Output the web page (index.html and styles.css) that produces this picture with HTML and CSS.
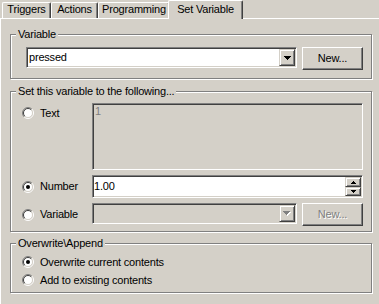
FILE: index.html
```html
<!DOCTYPE html>
<html>
<head>
<meta charset="utf-8">
<link rel="stylesheet" href="styles.css">
</head>
<body>
<div class="tabs">
  <div class="tab t1">Triggers</div>
  <div class="tab t2">Actions</div>
  <div class="tab t3">Programming</div>
  <div class="tab sel">Set Variable</div>
</div>
<div class="panel">
  <div class="group g1">
    <span class="legend">Variable</span>
    <div class="row">
      <div class="combo sunken c-main">
        <span class="val">pressed</span>
        <span class="ddbtn rb"><svg width="7" height="4" viewBox="0 0 7 4"><path d="M0 0h7v1h-1v1h-1v1h-1v1h-1v-1h-1v-1h-1v-1h-1z" fill="#000"/></svg></span>
      </div>
      <div class="btn">New...</div>
    </div>
  </div>

  <div class="group g2">
    <span class="legend">Set this variable to the following...</span>
    <div class="grid">
      <label class="radio r-top">
        <svg width="12" height="12" viewBox="0 0 12 12"><circle cx="6" cy="6" r="4.5" fill="#fff"/><path d="M9.9 2.1A5.5 5.5 0 0 0 2.1 9.9" fill="none" stroke="#808080"/><path d="M2.1 9.9A5.5 5.5 0 0 0 9.9 2.1" fill="none" stroke="#fff"/><path d="M9.2 2.8A4.5 4.5 0 0 0 2.8 9.2" fill="none" stroke="#404040"/><path d="M2.8 9.2A4.5 4.5 0 0 0 9.2 2.8" fill="none" stroke="#d4d0c8"/></svg>
        <span>Text</span>
      </label>
      <div class="area sunken">1</div>

      <label class="radio">
        <svg width="12" height="12" viewBox="0 0 12 12"><circle cx="6" cy="6" r="4.5" fill="#fff"/><path d="M9.9 2.1A5.5 5.5 0 0 0 2.1 9.9" fill="none" stroke="#808080"/><path d="M2.1 9.9A5.5 5.5 0 0 0 9.9 2.1" fill="none" stroke="#fff"/><path d="M9.2 2.8A4.5 4.5 0 0 0 2.8 9.2" fill="none" stroke="#404040"/><path d="M2.8 9.2A4.5 4.5 0 0 0 9.2 2.8" fill="none" stroke="#d4d0c8"/><circle cx="6" cy="6" r="2" fill="#000"/></svg>
        <span>Number</span>
      </label>
      <div class="edit sunken num">
        <span class="val">1.00</span>
        <span class="spin">
          <span class="rb up"><svg width="5" height="3" viewBox="0 0 5 3"><path d="M2 0h1v1h1v1h1v1h-5v-1h1v-1h1z" fill="#000"/></svg></span>
          <span class="rb down"><svg width="5" height="3" viewBox="0 0 5 3"><path d="M0 0h5v1h-1v1h-1v1h-1v-1h-1v-1h-1z" fill="#000"/></svg></span>
        </span>
      </div>

      <label class="radio">
        <svg width="12" height="12" viewBox="0 0 12 12"><circle cx="6" cy="6" r="4.5" fill="#fff"/><path d="M9.9 2.1A5.5 5.5 0 0 0 2.1 9.9" fill="none" stroke="#808080"/><path d="M2.1 9.9A5.5 5.5 0 0 0 9.9 2.1" fill="none" stroke="#fff"/><path d="M9.2 2.8A4.5 4.5 0 0 0 2.8 9.2" fill="none" stroke="#404040"/><path d="M2.8 9.2A4.5 4.5 0 0 0 9.2 2.8" fill="none" stroke="#d4d0c8"/></svg>
        <span>Variable</span>
      </label>
      <div class="row">
        <div class="combo sunken c-var disabled">
          <span class="val"></span>
          <span class="ddbtn rb"><svg width="8" height="5" viewBox="0 0 8 5"><path d="M1 1h7v1h-1v1h-1v1h-1v1h-1v-1h-1v-1h-1v-1h-1z" fill="#fff"/><path d="M0 0h7v1h-1v1h-1v1h-1v1h-1v-1h-1v-1h-1v-1h-1z" fill="#808080"/></svg></span>
        </div>
        <div class="btn disabled">New...</div>
      </div>
    </div>
  </div>

  <div class="group g3">
    <span class="legend">Overwrite\Append</span>
    <div class="stack">
      <label class="radio">
        <svg width="12" height="12" viewBox="0 0 12 12"><circle cx="6" cy="6" r="4.5" fill="#fff"/><path d="M9.9 2.1A5.5 5.5 0 0 0 2.1 9.9" fill="none" stroke="#808080"/><path d="M2.1 9.9A5.5 5.5 0 0 0 9.9 2.1" fill="none" stroke="#fff"/><path d="M9.2 2.8A4.5 4.5 0 0 0 2.8 9.2" fill="none" stroke="#404040"/><path d="M2.8 9.2A4.5 4.5 0 0 0 9.2 2.8" fill="none" stroke="#d4d0c8"/><circle cx="6" cy="6" r="2" fill="#000"/></svg>
        <span>Overwrite current contents</span>
      </label>
      <label class="radio">
        <svg width="12" height="12" viewBox="0 0 12 12"><circle cx="6" cy="6" r="4.5" fill="#fff"/><path d="M9.9 2.1A5.5 5.5 0 0 0 2.1 9.9" fill="none" stroke="#808080"/><path d="M2.1 9.9A5.5 5.5 0 0 0 9.9 2.1" fill="none" stroke="#fff"/><path d="M9.2 2.8A4.5 4.5 0 0 0 2.8 9.2" fill="none" stroke="#404040"/><path d="M2.8 9.2A4.5 4.5 0 0 0 9.2 2.8" fill="none" stroke="#d4d0c8"/></svg>
        <span>Add to existing contents</span>
      </label>
    </div>
  </div>
</div>
</body>
</html>
```

FILE: styles.css
```css
html, body {
  margin: 0;
  padding: 0;
  background: #d4d0c8;
}
body {
  width: 379px;
  height: 304px;
  overflow: hidden;
  font-family: "Liberation Sans", Arial, sans-serif;
  font-size: 11px;
  letter-spacing: -0.2px;
  line-height: 13px;
  color: #000;
}

/* Tabs */
.tabs {
  display: flex;
  align-items: flex-end;
  height: 18px;
  padding-left: 2px;
}
.tab {
  box-sizing: border-box;
  height: 16px;
  border-top: 1px solid #fff;
  border-left: 1px solid #fff;
  border-right: 1px solid #404040;
  box-shadow: inset -1px 0 0 #808080;
  border-radius: 2px 2px 0 0;
  text-align: center;
  white-space: nowrap;
  background: #d4d0c8;
}
.t1 { width: 49px; }
.t2 { width: 47px; }
.t3 { width: 72px; }
.tab.sel {
  position: relative;
  z-index: 1;
  width: 75px;
  height: 19px;
  margin-left: -2px;
  margin-bottom: -1px;
  padding-top: 2px;
}

/* Panel */
.panel {
  box-sizing: border-box;
  height: 286px;
  border-top: 1px solid #fff;
  border-left: 1px solid #fff;
  padding: 15px 7px 0 9px;
}

.group {
  position: relative;
  box-sizing: border-box;
  border: 1px solid #808080;
  box-shadow: 1px 1px 0 #fff, inset 1px 1px 0 #fff;
}
.legend {
  position: absolute;
  top: -7px;
  left: 5px;
  padding: 0 2px;
  background: #d4d0c8;
  white-space: nowrap;
}
.g1 { padding: 12px 8px 8px 15px; }
.g2 { margin-top: 12px; padding: 11px 8px 5px 11px; }
.g3 { margin-top: 11px; padding: 10px 8px 4px 11px; }

.row {
  display: flex;
  gap: 5px;
  align-items: flex-start;
}

/* 3D borders */
.sunken {
  box-sizing: border-box;
  border: 1px solid;
  border-color: #808080 #fff #fff #808080;
  box-shadow: inset 1px 1px 0 #404040, inset -1px -1px 0 #d4d0c8;
}
.rb {
  box-sizing: border-box;
  border: 1px solid;
  border-color: #d4d0c8 #404040 #404040 #d4d0c8;
  box-shadow: inset 1px 1px 0 #fff, inset -1px -1px 0 #808080;
  background: #d4d0c8;
  display: flex;
  align-items: center;
  justify-content: center;
}
.btn {
  box-sizing: border-box;
  width: 61px;
  height: 23px;
  border: 1px solid;
  border-color: #fff #404040 #404040 #fff;
  box-shadow: inset -1px -1px 0 #808080;
  display: flex;
  align-items: center;
  justify-content: center;
}
.btn.disabled {
  color: #808080;
  text-shadow: 1px 1px 0 #fff;
}

/* Combo */
.combo {
  display: flex;
  align-items: center;
  height: 21px;
  padding: 1px;
  background: #fff;
}
.combo .val {
  flex: 1;
  padding-left: 1px;
}
.ddbtn {
  width: 16px;
  height: 17px;
  align-self: stretch;
}
.c-main { width: 271px; }
.c-var { width: 205px; }
.combo.disabled { background: #d4d0c8; }

/* Grid of value rows */
.grid {
  display: grid;
  grid-template-columns: 70px 271px;
  grid-template-rows: 67px 23px 23px;
  row-gap: 5px;
}

.radio {
  display: flex;
  align-items: center;
  gap: 6px;
  height: 14px;
  align-self: center;
  white-space: nowrap;
}
.radio svg { flex: none; }
.r-top {
  align-self: start;
  margin-top: 3px;
}

.area {
  background: #d4d0c8;
  color: #808080;
  padding: 1px 2px;
}

.edit.num {
  display: flex;
  align-items: stretch;
  padding: 1px;
  background: #fff;
  height: 23px;
}
.num .val {
  flex: 1;
  display: flex;
  align-items: center;
  padding-left: 0;
}
.spin {
  width: 16px;
  display: flex;
  flex-direction: column;
}
.spin .up { height: 10px; }
.spin .down { height: 9px; }

.stack {
  display: flex;
  flex-direction: column;
  align-items: flex-start;
  gap: 2px;
}
.stack .radio {
  height: 16px;
  align-self: flex-start;
}
```
